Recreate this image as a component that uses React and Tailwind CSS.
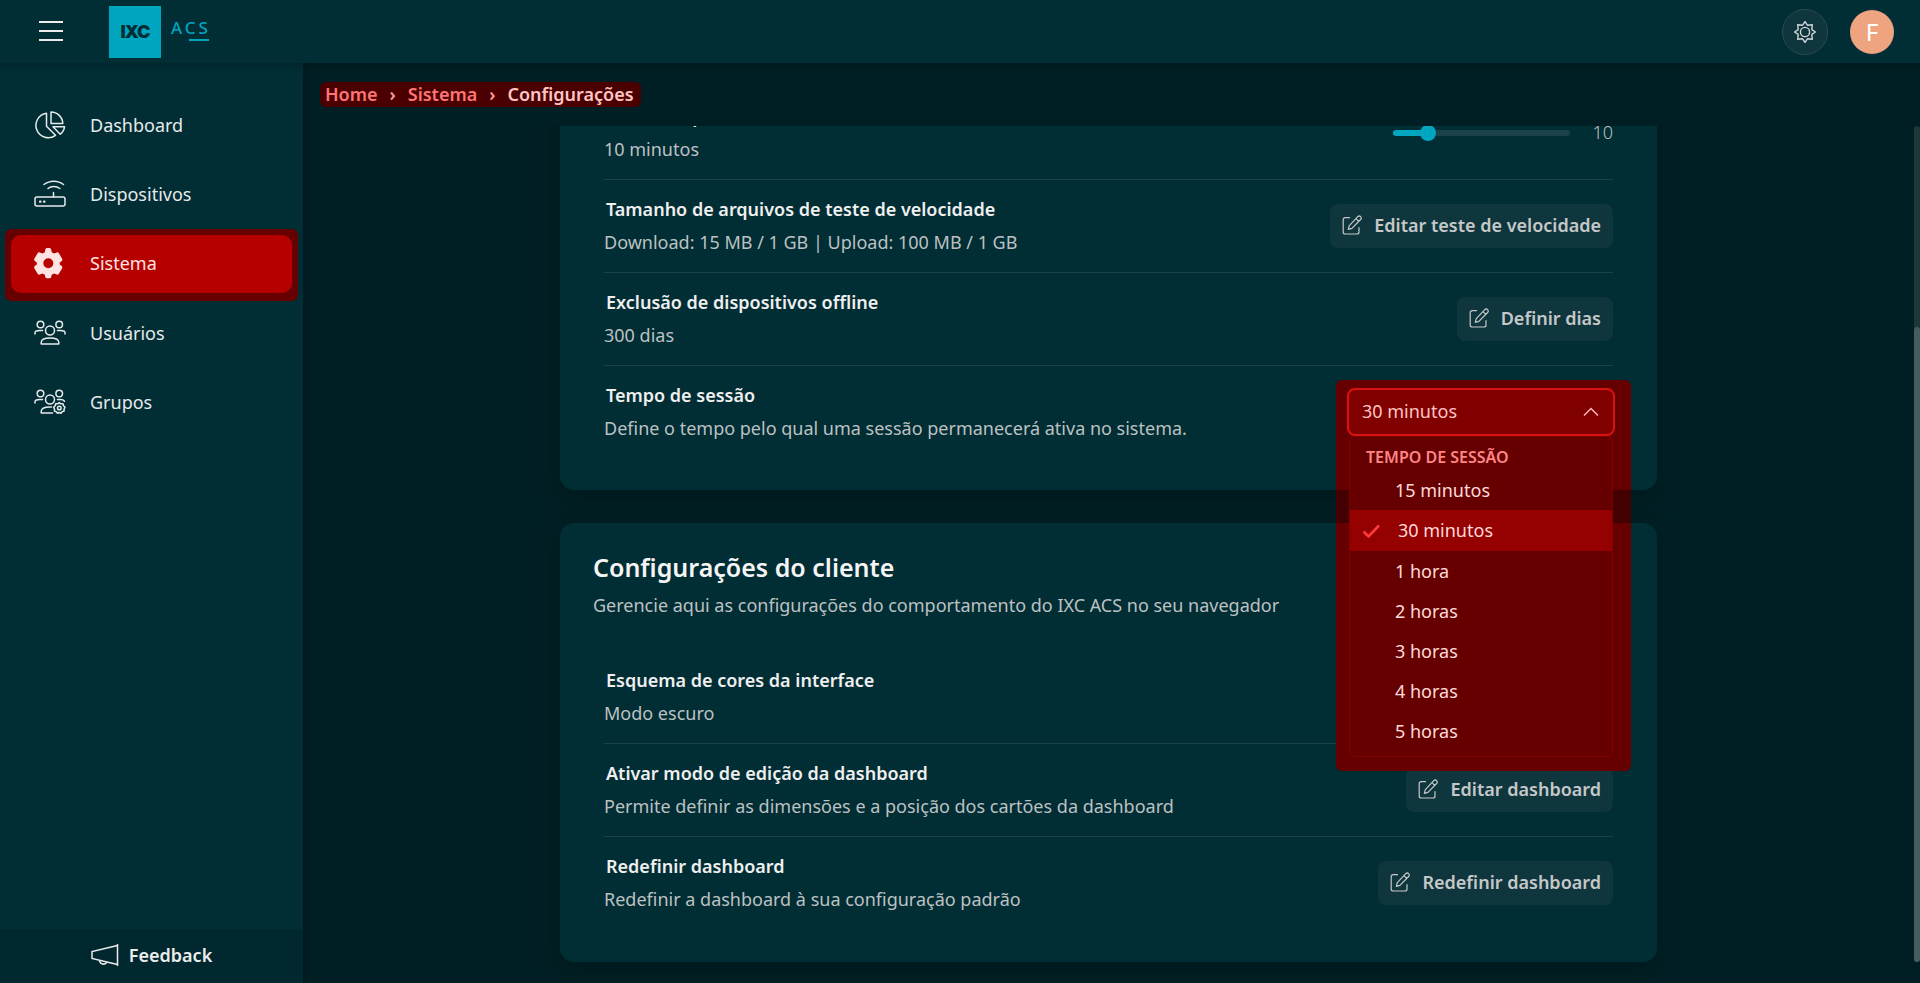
import React, { useState } from 'react'

const navItems = [
  { id: 'dashboard', label: 'Dashboard', icon: PieIcon },
  { id: 'devices', label: 'Dispositivos', icon: RouterIcon },
  { id: 'system', label: 'Sistema', icon: GearIcon, active: true },
  { id: 'users', label: 'Usuários', icon: UsersIcon },
  { id: 'groups', label: 'Grupos', icon: GroupsIcon }
]

const sessionOptions = ['15 minutos', '30 minutos', '1 hora', '2 horas', '3 horas', '4 horas', '5 horas']

function PieIcon() {
  return (
    <svg className="w-8 h-8" viewBox="0 0 32 32" fill="none" stroke="currentColor" strokeWidth="1.5" strokeLinejoin="round">
      <path d="M12.5 4.2A12.3 12.3 0 1 0 21.5 26.3L12.5 17.2Z" />
      <path d="M17 3V14.5H28.8A11.8 11.8 0 0 0 17 3Z" />
      <path d="M19 17.8H30.5A11 11 0 0 1 26.2 25.2Z" />
    </svg>
  )
}

function RouterIcon() {
  return (
    <svg className="w-8 h-8" viewBox="0 0 32 32" fill="none" stroke="currentColor" strokeWidth="1.5" strokeLinecap="round" strokeLinejoin="round">
      <rect x="1" y="19" width="30" height="9" rx="2" />
      <path d="M19.5 19V14.5M10 6.5C15.5 2 24 2 29.5 6.5M14 10.5C17 7.7 22.5 7.7 25.8 10.5" />
      <path d="M6 23.7H6.5M10 23.7H10.5" strokeWidth="2.2" />
    </svg>
  )
}

function GearIcon() {
  return (
    <svg className="w-8 h-8" viewBox="0 0 32 32" fill="currentColor">
      <path
        fillRule="evenodd"
        d="M12.3 2.5Q12.5 1 14 1H16.5Q18 1 18.2 2.5L18.7 5.2L21 6.5L23.7 5.5Q25.1 5 25.9 6.3L29 11.6Q29.8 12.9 28.7 13.9L26.7 15.6V17.4L28.7 19.1Q29.8 20.1 29 21.4L25.9 26.7Q25.1 28 23.7 27.5L21 26.5L18.7 27.8L18.2 30Q18 31.3 16.5 31.3H14Q12.5 31.3 12.3 30L11.8 27.8L9.5 26.5L6.8 27.5Q5.4 28 4.6 26.7L1.5 21.4Q.7 20.1 1.8 19.1L3.8 17.4V15.6L1.8 13.9Q.7 12.9 1.5 11.6L4.6 6.3Q5.4 5 6.8 5.5L9.5 6.5L11.8 5.2ZM15.3 11.3A5 5 0 1 0 15.3 21.3A5 5 0 1 0 15.3 11.3Z"
      />
    </svg>
  )
}

function UsersIcon() {
  return (
    <svg className="w-8 h-8" viewBox="0 0 32 32" fill="none" stroke="currentColor" strokeWidth="1.5" strokeLinecap="round" strokeLinejoin="round">
      <circle cx="6.5" cy="7.5" r="3.3" />
      <circle cx="25.2" cy="7.5" r="3.3" />
      <circle cx="16" cy="13.5" r="4.5" />
      <path d="M7.2 27V25.5C7.2 22.8 10.5 21 16 21S24.8 22.8 24.8 25.5V27Z" />
      <path d="M1 17V15.8C1 14.2 3.2 13.5 5.5 13.5H8.5M31 17V15.8C31 14.2 28.8 13.5 26.5 13.5H23.5" />
    </svg>
  )
}

function GroupsIcon() {
  return (
    <svg className="w-8 h-8" viewBox="0 0 32 32" fill="none" stroke="currentColor" strokeWidth="1.5" strokeLinecap="round" strokeLinejoin="round">
      <circle cx="6.5" cy="7.5" r="3.3" />
      <circle cx="25.2" cy="7.5" r="3.3" />
      <circle cx="16" cy="13.5" r="4.5" />
      <path d="M18.5 27H7.2V25.5C7.2 22.8 10.5 21 16 21H17.5" />
      <path d="M1 17V15.8C1 14.2 3.2 13.5 5.5 13.5H8.5M30.5 15.3C29.5 13.9 28 13.5 26.5 13.5H23.5" />
      <path d="M23.7 17.8L25.3 16.6L26.9 17.8L29 17.7L29.5 19.7L31 21.2L30.1 23L30.1 25L28.1 25.7L26.9 27.3L25.3 26.5L23.5 27.3L22.3 25.7L20.4 25L20.5 23L19.6 21.2L21.2 19.7L21.7 17.8Z" />
      <circle cx="25.3" cy="22" r="1.8" />
    </svg>
  )
}

function EditIcon() {
  return (
    <svg className="w-5 h-5" viewBox="0 0 20 20" fill="none" stroke="currentColor" strokeWidth="1.2" strokeLinecap="round" strokeLinejoin="round">
      <path d="M7.5 2.7H3.5A2 2 0 0 0 1.2 5V17A2 2 0 0 0 3.2 19H15A2 2 0 0 0 17 17V12.5" />
      <path d="M6.3 14.3L7.3 10.7L15.8 1.7A1.9 1.9 0 0 1 18.6 4.5L9.9 13.3ZM14 3.6L16.7 6.3" />
    </svg>
  )
}

function SunIcon() {
  return (
    <svg className="w-6 h-6" viewBox="0 0 24 24" fill="none" stroke="currentColor" strokeWidth="1.4" strokeLinejoin="round">
      <path d="M12 1.6L14.4 5.2L19.3 4.7L18.8 9.6L22.4 12L18.8 14.4L19.3 19.3L14.4 18.8L12 22.4L9.6 18.8L4.7 19.3L5.2 14.4L1.6 12L5.2 9.6L4.7 4.7L9.6 5.2Z" />
      <circle cx="12" cy="12" r="4.6" />
    </svg>
  )
}

function MegaphoneIcon() {
  return (
    <svg className="w-7 h-6" viewBox="0 0 28 24" fill="none" stroke="currentColor" strokeWidth="1.5">
      <path d="M1 8.5V15.5L26.5 21.5V2.5ZM26.5 1V23" />
      <path d="M8.5 17.5A4 4 0 0 0 16 19" />
    </svg>
  )
}

function Header() {
  return (
    <header className="relative z-20 flex items-center justify-between h-[63px] shrink-0 pl-[39px] pr-[26px] bg-[#012d34] shadow-[0_2px_8px_rgba(0,0,0,0.2)]">
      <div className="flex items-center">
        <button type="button" aria-label="Menu" className="flex flex-col gap-[7px] w-6 pb-0.5">
          <span className="h-0.5 w-6 bg-[#ececec]"></span>
          <span className="h-0.5 w-6 bg-[#ececec]"></span>
          <span className="h-0.5 w-6 bg-[#ececec]"></span>
        </button>
        <a href="#" className="flex items-center gap-2.5 ml-[46px] text-[#00a5c0]">
          <span className="flex items-center justify-center w-[52px] h-[52px] bg-[#00a5c0] text-[#012d34] font-['Inter'] text-[18px] font-black tracking-tighter">
            IXC
          </span>
          <span className="flex flex-col pb-1">
            <span className="text-[17px] leading-[18px] font-medium tracking-[3px]">ACS</span>
            <span className="self-end w-5 h-0.5 mt-0.5 mr-0.5 bg-[#00a5c0]"></span>
          </span>
        </a>
      </div>
      <div className="flex items-center gap-[22px]">
        <button type="button" aria-label="Tema" className="flex items-center justify-center w-[46px] h-[46px] rounded-full border border-[#2c4b51] bg-[#0f363d] text-[#d0d5d6]">
          <SunIcon />
        </button>
        <button type="button" aria-label="Perfil" className="flex items-center justify-center w-11 h-11 rounded-full bg-[#efa480] text-white text-[24px]">
          F
        </button>
      </div>
    </header>
  )
}

function NavLink({ item }) {
  const IconComponent = item.icon
  return (
    <a
      href="#"
      className={
        item.active
          ? 'flex items-center h-[58px] pl-[22px] gap-[25px] pb-0.5 rounded-[10px] bg-[#b60000] text-[#ffe3e3]'
          : 'flex items-center h-[58px] pl-[23px] gap-6 pb-0.5 rounded-[10px] text-[#e6eaeb]'
      }
    >
      <IconComponent />
      {item.label}
    </a>
  )
}

function Sidebar() {
  return (
    <aside className="relative z-10 flex flex-col justify-between w-[303px] shrink-0 bg-[#012d34] shadow-[2px_0_8px_rgba(0,0,0,0.2)]">
      <nav className="flex flex-col gap-[11px] pt-[34px] px-[11px]">
        {navItems.map((item) =>
          item.active ? (
            <div key={item.id} className="-mx-1.5 -mt-1.5 -mb-[7px] px-1.5 pt-1.5 pb-2 rounded-md bg-[#660000]">
              <NavLink item={item} />
            </div>
          ) : (
            <NavLink key={item.id} item={item} />
          )
        )}
      </nav>
      <button type="button" className="flex items-center justify-center gap-2.5 h-[54px] pb-0.5 bg-[#01282e] text-[#ececec] font-semibold">
        <MegaphoneIcon />
        Feedback
      </button>
    </aside>
  )
}

function Row({ title, text, children }) {
  return (
    <div className="flex items-center justify-between h-[93px] border-b border-[#1b424a] last:h-[92px] last:border-b-0">
      <div className="pb-px">
        <h3 className="pl-0.5 mb-[7px] leading-[26px] font-semibold text-[#efefef]">{title}</h3>
        <p className="leading-[26px] text-[#bcc1c2]">{text}</p>
      </div>
      {children}
    </div>
  )
}

function EditButton({ children }) {
  return (
    <button type="button" className="flex items-center gap-3 h-11 px-3 pb-0.5 rounded-lg bg-[#10363d] text-[#c5c8c9] font-semibold">
      <EditIcon />
      {children}
    </button>
  )
}

function SessionSelect() {
  const [value, setValue] = useState('30 minutos')

  return (
    <div className="relative z-10 w-[268px] -mr-0.5">
      {/* Highlighted area behind the open list */}
      <div className="absolute -top-2 -left-[11px] w-[295px] h-[391px] rounded-md bg-[linear-gradient(#660000_110px,#420000_110px,#420000_143px,#660000_143px)]"></div>
      <div className="relative">
        <select
          aria-label="Tempo de sessão"
          value={value}
          onChange={(e) => setValue(e.target.value)}
          className="block appearance-none w-full h-12 pl-[13px] pr-12 pb-0.5 rounded-lg border-2 border-[#d81111] bg-[#800000] text-[#ffc4c4] outline-none"
        >
          {sessionOptions.map((option) => (
            <option key={option}>{option}</option>
          ))}
        </select>
        <svg className="absolute right-4 top-4 w-4 h-4 pointer-events-none" viewBox="0 0 16 16" fill="none" stroke="#ffb4b4" strokeWidth="1.5">
          <path d="M1 11.5L8 4.5L15 11.5" />
        </svg>
      </div>
      <ul role="listbox" aria-label="Tempo de sessão" className="absolute top-12 left-0.5 right-0.5 pb-[5px] pt-2 rounded-md border border-[#800000] bg-[#660000] text-[#ffdada]">
        <li role="presentation" className="pl-4 h-[25px] leading-[25px] text-[16px] font-semibold text-[#ff8585]">
          TEMPO DE SESSÃO
        </li>
        {sessionOptions.map((option) => (
          <li
            key={option}
            role="option"
            aria-selected={option === value}
            onClick={() => setValue(option)}
            className={option === value ? 'flex items-center h-[41px] pl-3 gap-[18px] bg-[#950000]' : 'flex items-center h-10 pl-[45px]'}
          >
            {option === value && (
              <svg className="w-[18px] h-[18px]" viewBox="0 0 18 18" fill="none" stroke="#ff3a3a" strokeWidth="2.6">
                <path d="M1.5 9.5L6.5 14.5L17 3.5" />
              </svg>
            )}
            {option}
          </li>
        ))}
      </ul>
    </div>
  )
}

function Card({ children }) {
  return (
    <section className="px-11 pb-8 rounded-[14px] bg-[#012d34] shadow-[0_8px_24px_rgba(0,0,0,0.2)]">
      {children}
    </section>
  )
}

function App() {
  const [limit, setLimit] = useState(10)

  return (
    <div className="flex flex-col h-screen overflow-hidden bg-[#001f24] font-['Noto_Sans',sans-serif] text-[18px]">
      <Header />
      <div className="flex flex-1 min-h-0">
        <Sidebar />
        <main className="flex flex-col flex-1 min-w-0 pb-[21px]">
          {/* Breadcrumb */}
          <div className="flex items-start h-[63px] shrink-0 pt-[19px] pl-[17px]">
            <nav aria-label="Breadcrumb" className="flex items-center gap-3 h-[25px] pl-[5px] pr-[7px] rounded-md bg-[#4a0000] text-[#ff7575] font-semibold">
              <a href="#">Home</a>
              <span className="text-[#ffa0a0]">›</span>
              <a href="#">Sistema</a>
              <span className="text-[#ffa0a0]">›</span>
              <span className="text-[#ffc4c4]">Configurações</span>
            </nav>
          </div>

          <div className="flex flex-1 min-h-0">
            <div className="flex flex-1 flex-col justify-end min-w-0 [clip-path:inset(0_0_-21px_0)]">
              <div className="flex flex-col gap-[33px] w-full max-w-[1097px] mx-auto">
                <div className="relative z-10">
                  <Card>
                    <Row title="Limite de pausa" text="10 minutos">
                      <div className="flex items-center gap-[22px]">
                        <input
                          type="range"
                          aria-label="Limite de pausa"
                          min="0"
                          max="60"
                          value={limit}
                          onChange={(e) => setLimit(Number(e.target.value))}
                          className="appearance-none w-[177px] h-1.5 rounded-full bg-[linear-gradient(90deg,#00a5c0_20%,#1b424a_20%)] [&::-webkit-slider-thumb]:appearance-none [&::-webkit-slider-thumb]:w-4 [&::-webkit-slider-thumb]:h-4 [&::-webkit-slider-thumb]:rounded-full [&::-webkit-slider-thumb]:bg-[#00a5c0]"
                        />
                        <span className="pb-0.5 font-light text-[#bcc1c2]">{limit}</span>
                      </div>
                    </Row>
                    <Row title="Tamanho de arquivos de teste de velocidade" text="Download: 15 MB / 1 GB | Upload: 100 MB / 1 GB">
                      <EditButton>Editar teste de velocidade</EditButton>
                    </Row>
                    <Row title="Exclusão de dispositivos offline" text="300 dias">
                      <EditButton>Definir dias</EditButton>
                    </Row>
                    <Row title="Tempo de sessão" text="Define o tempo pelo qual uma sessão permanecerá ativa no sistema.">
                      <SessionSelect />
                    </Row>
                  </Card>
                </div>

                <Card>
                  <div className="h-32 pt-7 -ml-[11px]">
                    <h2 className="text-[25px] leading-8 font-semibold text-[#f5f5f5]">Configurações do cliente</h2>
                    <p className="mt-[9px] leading-[26px] text-[#bcc1c2]">
                      Gerencie aqui as configurações do comportamento do IXC ACS no seu navegador
                    </p>
                  </div>
                  <div className="pb-px">
                    <Row title="Esquema de cores da interface" text="Modo escuro" />
                    <Row title="Ativar modo de edição da dashboard" text="Permite definir as dimensões e a posição dos cartões da dashboard">
                      <EditButton>Editar dashboard</EditButton>
                    </Row>
                    <Row title="Redefinir dashboard" text="Redefinir a dashboard à sua configuração padrão">
                      <EditButton>Redefinir dashboard</EditButton>
                    </Row>
                  </div>
                </Card>
              </div>
            </div>

            {/* Scrollbar */}
            <div className="flex flex-col justify-end w-1.5 rounded-full bg-[#1c363a]">
              <div className="h-[76%] rounded-full bg-[#465c5f]"></div>
            </div>
          </div>
        </main>
      </div>
    </div>
  )
}

export default App
